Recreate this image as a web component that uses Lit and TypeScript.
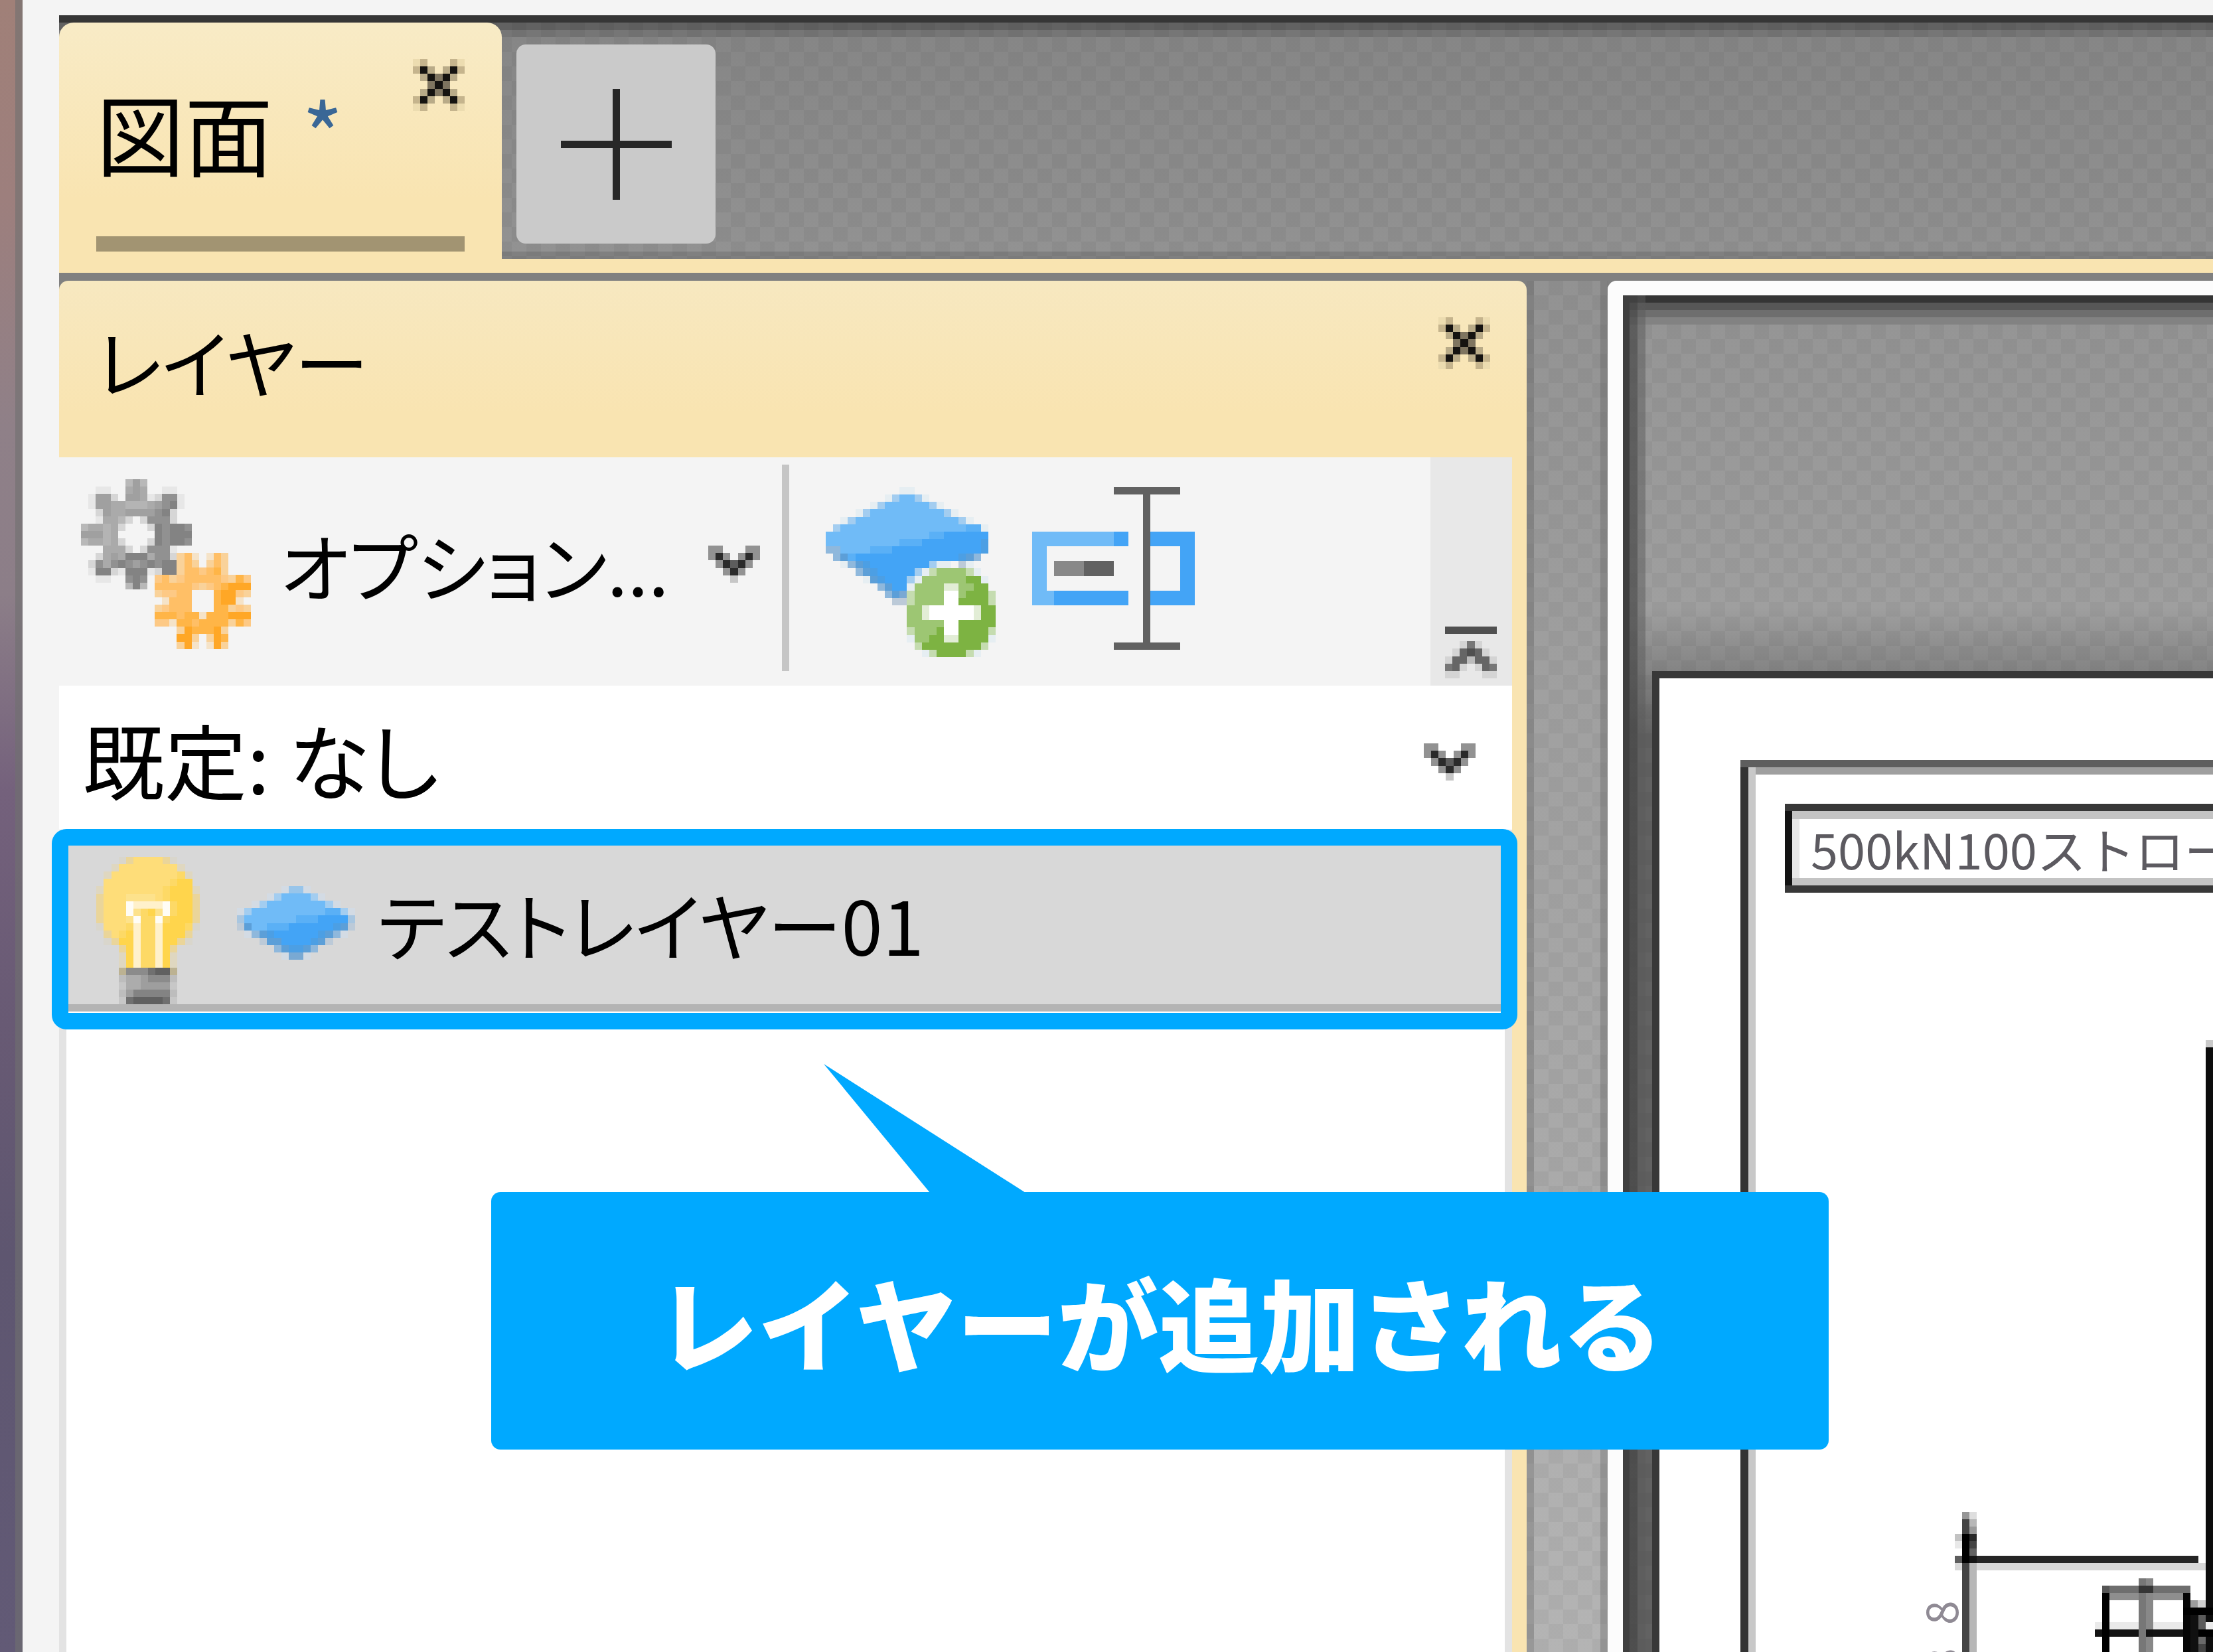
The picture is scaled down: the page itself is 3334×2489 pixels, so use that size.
import { LitElement, html, svg, css } from "lit";
import { customElement, property } from "lit/decorators.js";

type Sprite = { rows: string[]; colors: Record<string, string> };

const layerColors: Record<string, string> = {
  A: "#70bbf7", B: "#43a4f6", m: "#5ab0f6", n: "#4c9fe4", s: "#5c9fd8",
  t: "#a3cdf0", w: "#8fb8dc", v: "#bccad8", u: "#a8c6e0", e: "#98c5ea", E: "#79a9d3", f: "#d3dbe4",
};

const SPRITES: Record<string, Sprite> = {
  close: {
    colors: { a: "#ecdcb0", b: "#c5b48d", c: "#b9ab88", g: "#7f7560", K: "#151310" },
    rows: ["ab...ba", "bKc.cKb", ".cKgKc.", "..gKg..", ".cKgKc.", "bKc.cKb", "ab...ba"],
  },
  chevron: {
    colors: { g: "#929292", d: "#5c5c5c", K: "#2a2a2a", l: "#c6c6c6" },
    rows: ["gg...gg", "gKg.gKg", ".gKdKg.", "..gKg..", "...l..."],
  },
  overflow: {
    colors: { K: "#505050", k: "#666", m: "#777", l: "#d4d4d4", c: "#bcbcbc" },
    rows: ["KKKKKKK", ".......", "..lml..", ".lkKkl.", "lkkckkl", "mkl.lkm", "ll...ll"],
  },
  grayGear: {
    colors: { b: "#b8b8b8", G: "#a0a0a0", L: "#aaa", M: "#b4b4b4", D: "#919191", K: "#838383", e: "#d6d6d6", f: "#e7e7e7" },
    rows: [
      "......bGb......",
      "..ff..LGL..ff..",
      ".fGGe.GGLfeDDf.",
      ".fGGLLMMMLGDKf.",
      "..eGLLGGGGDKe..",
      "..fLLbe.eDDDe..",
      "bLLMLe...eKDKKD",
      "GGGML.....KDKKK",
      "bLLMLe...eKDKKD",
      "...LLLe.eDDDf..",
      "..eLGLKKKLDDe..",
      ".eDLDKDGDKDKK..",
      ".fKKefKKKfeKK..",
      "..ff..DKD......",
      "......bKb......",
    ],
  },
  orangeGear: {
    colors: { P: "#f9d29a", Q: "#ffbf66", R: "#ffb547", S: "#ffa726", T: "#fdc985", F: "#f5e3c8" },
    rows: [
      "...PQF.FQP...",
      "...PQP.PQP...",
      "...PQQTQRP...",
      "TQPTQQQQQTPRT",
      "QQQQQTPTQRSSS",
      "PTTQQ...RSSTP",
      ".FQQQ...RSSF.",
      "PTQQQ...RRPTP",
      "RRRQRRFRRRSSS",
      "TTFRRQRRRRPRT",
      "...PSRRRSP...",
      "...SSP.PSR...",
      "...PSF.FSP...",
    ],
  },
  layer: {
    colors: layerColors,
    rows: [
      "......feef......",
      "....ftAAAAtf....",
      "..ftAAAAAAAAtf..",
      "ftAAAAAAAAAAmmtf",
      "uAAAAAAAmmmBBBBu",
      "vsAAmmmBBBBBBnsv",
      ".fwsnBBBBBBnswf.",
      "...vssBBBBnsv...",
      ".....wsnnsw.....",
      "......fEEf......",
    ],
  },
  addLayer: {
    colors: { ...layerColors, f: "#e6eef2", G: "#9dc673", g: "#7db342", p: "#c5dcb0", W: "#fff", e: "#e2edd6" },
    rows: [
      "..........ff...........",
      "........ftAAtf.........",
      "......ftAAAAAAtf.......",
      "....ftAAAAAAAAAAtf.....",
      "..ftAAAAAAAAAAAAAAtf...",
      ".tAAAAAAAAAAAAAAAAAmmf.",
      "AAAAAAAAAAAAAAmmBBBBBB.",
      "AAAAAAAAAAmmmBBBBBBBBn.",
      "wwAAAAmmmBBBBBBBBBBBBn.",
      ".wsmBBBBBBBBBBBBBBnsw..",
      "..fwsnBBBBBBBBtff.vf...",
      "....wsnBBBBBtfpGGGGpf..",
      ".....fsnBBBtfGGGGGGggf.",
      ".......wsBBfGGGGeeGGgg.",
      "........wsEpGGGGWWGgggp",
      ".........vvpGGGGWWggggp",
      "...........GGeWWWWWWegg",
      "...........GGeWWWWWWegg",
      "...........GGGGGWWggggg",
      "...........pGGGgWWggggp",
      "...........fGGggeeggggf",
      "............pggggggggp.",
      ".............fpggggpf..",
    ],
  },
  bulb: {
    colors: {
      Y: "#fedd79", G: "#ffd54c", H: "#fdd966", p: "#ead59a", q: "#dfd7c0", f: "#d9d6cc", o: "#fde28c",
      W: "#fffdf6", w: "#fff1cb", k: "#bcb292", D: "#8b8b8b", C: "#707070", K: "#606060", g: "#bdbdbd",
      a: "#acacac", b: "#9e9e9e", c: "#c7c7c7", M: "#838383",
    },
    rows: [
      "...fpYYYYpf...",
      "..qYYYYYYYYq..",
      ".qYYYYYYYYYHq.",
      ".YYYYYYYYYHGG.",
      "qYYYYYYYYHGGGq",
      "pYYYooooYHGGGp",
      "pYYYWwwwwWHGGp",
      "pYYYWoHGoWHGGp",
      "pYYYoWHHWHGGGp",
      "fYYYHwHHwGGGHf",
      ".pYHGwHHwGGGp.",
      ".fpGGwHHwGGpf.",
      "...pGwHHwGp...",
      "...qGwHHwGq...",
      "...qGwHHwGq...",
      "...kDDDCKKk...",
      "...gaabDDDg...",
      "...caabbbbc...",
      "...gbMMMMMg...",
      "...cCKKKKCc...",
    ],
  },
};

/** Draws a named sprite, one rect for each run of equal cells. */
@customElement("pixel-icon")
export class PixelIcon extends LitElement {
  @property() name = "close";

  static styles = css`
    :host { display: block; }
    svg { display: block; width: 100%; height: 100%; }
  `;

  render() {
    const { rows, colors } = SPRITES[this.name];
    const cells = rows.flatMap((row, y) =>
      [...row.matchAll(/(.)\1*/g)]
        .filter((run) => run[1] !== ".")
        .map((run) => svg`<rect x=${run.index} y=${y} width=${run[0].length} height="1" fill=${colors[run[1]]}></rect>`)
    );
    return html`<svg viewBox="0 0 ${rows[0].length} ${rows.length}" shape-rendering="crispEdges" aria-hidden="true">${cells}</svg>`;
  }
}

@customElement("cad-sheet")
export class CadSheet extends LitElement {
  static styles = css`
    :host { display: block; }
    svg { display: block; width: 100%; height: 100%; }
    text { font-family: "Noto Sans CJK JP", sans-serif; fill: #5c5a60; }
    .title { font-size: 74px; }
    .dim { font-size: 66px; fill: #8f8a94; }
  `;

  render() {
    const r = (x: number, y: number, w: number | string, h: number | string, fill: string) =>
      svg`<rect x=${x} y=${y} width=${w} height=${h} fill=${fill}></rect>`;
    return html`<svg shape-rendering="crispEdges" aria-label="図面">
      ${r(134, 134, "100%", 11, "#9f9f9f")}${r(134, 134, 11, "100%", "#c8c8c8")}
      ${r(122, 123, "100%", 11, "#5e5e5e")}${r(122, 134, 12, "100%", "#333")}
      ${r(200, 200, "100%", 12, "#c4c4c4")}${r(200, 301, "100%", 11, "#c4c4c4")}
      ${r(200, 212, 11, 89, "#e8e8e8")}${r(189, 189, "100%", 11, "#383838")}
      ${r(189, 312, "100%", 11, "#383838")}${r(189, 200, 11, 112, "#131313")}
      <text class="title" x="228" y="288">500kN100ストロー</text>
      ${r(823, 545, 11, 12, "#c9c9c9")}${r(823, 556, 11, "100%", "#0c0c0c")}
      ${r(445, 1333, 378, 11, "#d8d8d8")}${r(445, 1322, 367, 11, "#252525")}
      ${r(456, 1256, 11, 11, "#969696")}${r(467, 1256, 11, 11, "#dedede")}
      ${r(456, 1267, 11, "100%", "#444")}${r(467, 1267, 11, "100%", "#b7b7b7")}
      ${r(456, 1289, 11, 44, "#000")}${r(467, 1278, 11, 11, "#999")}${r(467, 1289, 11, 11, "#282828")}
      ${r(467, 1300, 11, 11, "#444")}${r(467, 1311, 11, 11, "#626262")}${r(467, 1322, 11, 11, "#141414")}
      ${r(445, 1289, 11, 11, "#c3c3c3")}${r(445, 1300, 11, 11, "#e9e9e9")}${r(445, 1322, 11, 11, "#5d5d5d")}
      <text class="dim" transform="translate(450 1426) rotate(-90)">8</text>
      <text class="dim" transform="translate(450 1498) rotate(-90)">8</text>
      ${r(667, 1367, 133, 11, "#6e6e6e")}${r(678, 1378, 111, 11, "#8e8e8e")}
      ${r(667, 1367, 11, 11, "#555")}${r(656, 1422, 178, 11, "#eaeaea")}
      ${r(656, 1433, 178, 11, "#131313")}${r(667, 1378, 11, "100%", "#000")}
      ${r(722, 1356, 11, "100%", "#777")}${r(733, 1356, 11, "100%", "#888")}
      ${r(722, 1367, 22, 11, "#353535")}${r(733, 1433, 11, 11, "#111")}
      ${r(789, 1378, 11, "100%", "#050505")}${r(800, 1389, 11, 11, "#9c9c9c")}${r(811, 1389, 12, 11, "#d0d0d0")}
      ${r(789, 1400, 45, 11, "#000")}${r(800, 1411, 12, "100%", "#101010")}${r(812, 1411, 11, 22, "#5a5a5a")}
      ${r(812, 1433, 22, 11, "#000")}${r(812, 1444, 11, 11, "#6a6a6a")}${r(812, 1455, 11, "100%", "#444")}
    </svg>`;
  }
}

@customElement("app-root")
export class AppRoot extends LitElement {
  static styles = css`
    :host {
      display: block;
      overflow: hidden;
      font-family: "Noto Sans CJK JP", "Noto Sans", sans-serif;
      color: #000;
      --cream: #f9e4b1;
      --accent: #00a9ff;
      --weave: repeating-conic-gradient(rgba(0, 0, 0, 0.04) 0 25%, transparent 0 50%) 0 0 / 44px 44px;
    }
    * { box-sizing: border-box; }
    button, select {
      appearance: none;
      border: 0;
      margin: 0;
      padding: 0;
      background: none;
      border-radius: 0;
      font: inherit;
      color: inherit;
      text-align: left;
    }
    .app {
      display: flex;
      min-height: 100vh;
      background: #f4f4f4;
    }
    .desktop {
      flex: none;
      width: 34px;
      border-right: 11px solid rgba(112, 112, 112, 0.6);
      background: linear-gradient(#a08078, #9d7f7d 12%, #8f8088 26%, #8c7e88 36%, #74617c 48%, #685a74 62%, #5e5670 76%, #625a76);
    }
    .window {
      flex: 1;
      min-width: 0;
      display: flex;
      flex-direction: column;
      padding: 23px 0 0 55px;
    }
    .tabs {
      display: flex;
      height: 367px;
      border-top: 11px solid #363636;
      background: var(--weave), linear-gradient(#626262 11px, #767676 11px 22px, #868686 22px, #929292 345px, #808080 345px);
    }
    .tab {
      width: 667px;
      display: flex;
      flex-direction: column;
      justify-content: space-between;
      padding: 55px 56px 11px;
      border-radius: 22px 22px 0 0;
      background: linear-gradient(#f8ebc6, #f9e4b1 75%);
    }
    .tab-row {
      display: flex;
      justify-content: space-between;
      align-items: flex-start;
    }
    .tab-name {
      display: flex;
      gap: 44px;
      padding-top: 42px;
      font-size: 133px;
      line-height: 134px;
    }
    .star { color: #3a6796; }
    .icon-x { width: 78px; height: 78px; }
    .underline {
      height: 23px;
      background: #a29472;
    }
    .new-tab {
      flex: none;
      width: 300px;
      height: 300px;
      margin: 33px 22px;
      padding: 67px;
      border-radius: 14px;
      background: #cacaca;
    }
    .new-tab svg { display: block; width: 167px; height: 167px; }
    .rule {
      height: 21px;
      background: var(--cream);
    }
    .body {
      flex: 1;
      display: grid;
      grid-template-columns: minmax(0, 2211fr) 122px minmax(0, 912fr);
      padding-top: 12px;
      background: #808080;
    }
    .panel {
      position: relative;
      display: flex;
      flex-direction: column;
      padding-right: 22px;
      border-radius: 14px 14px 0 0;
      background: linear-gradient(#f7e8c0, #f9e4b1 200px);
    }
    .head {
      display: flex;
      justify-content: space-between;
      height: 266px;
      padding: 55px 33px 0 56px;
    }
    .caption {
      margin: 0;
      font-size: 112px;
      line-height: 130px;
      font-weight: 400;
      font-feature-settings: "palt";
    }
    .toolbar {
      display: flex;
      height: 344px;
      background: #f4f4f4;
    }
    .options {
      display: flex;
      align-items: center;
      margin: 11px 0 22px;
      padding: 0 33px 12px;
      border-right: 11px solid #c5c5c5;
      width: 1100px;
      font-size: 112px;
      font-feature-settings: "palt";
    }
    .options-name {
      flex: 1;
      display: flex;
      align-items: center;
      gap: 44px;
      white-space: nowrap;
    }
    .gears {
      display: grid;
      width: 256px;
      height: 256px;
      grid-template: repeat(23, 1fr) / repeat(23, 1fr);
    }
    .gear-a { grid-area: 1 / 1 / span 15 / span 15; }
    .gear-b { grid-area: 11 / 11 / span 13 / span 13; }
    .icon-v { flex: none; width: 78px; height: 56px; }
    .tools {
      flex: 1;
      display: flex;
      gap: 55px;
      padding: 45px 55px;
    }
    .icon-add { width: 256px; height: 256px; }
    .icon-rename { display: block; width: 245px; height: 245px; }
    .more {
      display: flex;
      align-items: flex-end;
      width: 123px;
      padding: 11px 22px;
      background: #e8e8e8;
    }
    .preset {
      display: flex;
      align-items: center;
      height: 217px;
      padding: 12px 55px 0 0;
      background: #fff;
    }
    .preset select {
      flex: 1;
      height: 205px;
      padding: 0 0 12px 35px;
      font-size: 124px;
      font-feature-settings: "palt";
    }
    .list {
      flex: 1;
      margin: 0;
      padding: 0;
      list-style: none;
      background: #fff;
      border: solid #e3e3e3;
      border-width: 0 11px;
    }
    .layer {
      position: relative;
      display: flex;
      align-items: center;
      gap: 56px;
      height: 274px;
      padding: 18px 45px 0;
      background: #d8d8d8;
      border-bottom: 11px solid #b4b4b4;
      font-size: 112px;
      font-feature-settings: "palt";
    }
    .icon-bulb { align-self: flex-end; width: 156px; height: 222px; }
    .icon-layer { width: 178px; height: 111px; }
    .layer-name {
      margin-left: -22px;
      white-space: nowrap;
    }
    .marker {
      position: absolute;
      inset: -1px -19px -38px -22px;
      border: 25px solid var(--accent);
      border-radius: 22px;
    }
    .callout {
      position: absolute;
      z-index: 1;
      left: 651px;
      top: 1373px;
      width: 2015px;
      margin: 0;
      border-radius: 14px;
      background: var(--accent);
      color: #fff;
      font-size: 152px;
      font-weight: 900;
      line-height: 388px;
      text-align: center;
      white-space: nowrap;
    }
    .tail {
      position: absolute;
      left: 501px;
      bottom: 387px;
      width: 304px;
      height: 194px;
      fill: var(--accent);
    }
    .splitter {
      border: solid rgba(90, 90, 90, 0.3);
      border-width: 0 11px;
      background: var(--weave), linear-gradient(#929292, #a0a0a0 30%, #b4b4b4);
    }
    .view {
      min-width: 0;
      display: flex;
      border: solid #fcfcfc;
      border-width: 22px 0 0 23px;
      border-radius: 14px 0 0 0;
      background:
        linear-gradient(90deg, #3f3f3f 10px, rgba(70, 70, 70, 0.7) 10px 22px, rgba(90, 90, 90, 0.5) 22px 34px, transparent 34px),
        linear-gradient(#353535 11px, #575757 11px 22px, #6e6e6e 22px 33px, #828282 33px 44px, transparent 44px),
        var(--weave),
        linear-gradient(#949494, #9f9f9f 470px, #848484 566px, #626262 660px);
    }
    .sheet {
      flex: 1;
      margin: 566px 0 0 44px;
      border: solid #383838;
      border-width: 11px 0 0 11px;
      background: #fff;
    }
  `;

  render() {
    return html`
      <div class="app">
        <div class="desktop"></div>
        <main class="window">
          <nav class="tabs">
            <div class="tab">
              <div class="tab-row">
                <span class="tab-name">図面<span class="star">*</span></span>
                <button aria-label="タブを閉じる"><pixel-icon class="icon-x" name="close"></pixel-icon></button>
              </div>
              <div class="underline"></div>
            </div>
            <button class="new-tab" aria-label="新しいタブ">
              <svg viewBox="0 0 15 15" shape-rendering="crispEdges" fill="#272727">
                <path d="M7 0h1v15H7zM0 7h15v1H0z"></path>
              </svg>
            </button>
          </nav>
          <div class="rule"></div>
          <div class="body">
            <section class="panel">
              <header class="head">
                <h1 class="caption">レイヤー</h1>
                <button class="icon-x" aria-label="パネルを閉じる"><pixel-icon class="icon-x" name="close"></pixel-icon></button>
              </header>
              <div class="toolbar">
                <button class="options">
                  <span class="options-name">
                    <span class="gears">
                      <pixel-icon class="gear-a" name="grayGear"></pixel-icon>
                      <pixel-icon class="gear-b" name="orangeGear"></pixel-icon>
                    </span>
                    オプション...
                  </span>
                  <pixel-icon class="icon-v" name="chevron"></pixel-icon>
                </button>
                <div class="tools">
                  <button class="icon-add" aria-label="レイヤーを追加"><pixel-icon class="icon-add" name="addLayer"></pixel-icon></button>
                  <button class="icon-rename" aria-label="名前を変更">
                    <svg class="icon-rename" viewBox="0 0 22 22" shape-rendering="crispEdges">
                      <path fill="#70bbf7" d="M0 6h11v2H2v6h1v2H0z"></path>
                      <path fill="#43a4f6" d="M11 6h2v2h-2zM16 6h6v10h-6v-2h4V8h-4zM3 14h10v2H3z"></path>
                      <path fill="#888" d="M3 10h4v2H3z"></path>
                      <path fill="#616161" d="M7 10h4v2H7zM11 0h9v1h-4v20h4v1h-9v-1h4V1h-4z"></path>
                    </svg>
                  </button>
                </div>
                <button class="more" aria-label="ツールバーを折りたたむ"><pixel-icon class="icon-x" name="overflow"></pixel-icon></button>
              </div>
              <div class="preset">
                <select aria-label="既定のレイヤー"><option>既定: なし</option></select>
                <pixel-icon class="icon-v" name="chevron"></pixel-icon>
              </div>
              <ul class="list">
                <li class="layer">
                  <pixel-icon class="icon-bulb" name="bulb"></pixel-icon>
                  <pixel-icon class="icon-layer" name="layer"></pixel-icon>
                  <span class="layer-name">テストレイヤー01</span>
                  <span class="marker"></span>
                </li>
              </ul>
              <p class="callout">
                <svg class="tail" viewBox="0 0 304 194" aria-hidden="true"><path d="M0 0L304 194H160z"></path></svg>レイヤーが追加される
              </p>
            </section>
            <div class="splitter"></div>
            <section class="view"><cad-sheet class="sheet"></cad-sheet></section>
          </div>
        </main>
      </div>
    `;
  }
}
